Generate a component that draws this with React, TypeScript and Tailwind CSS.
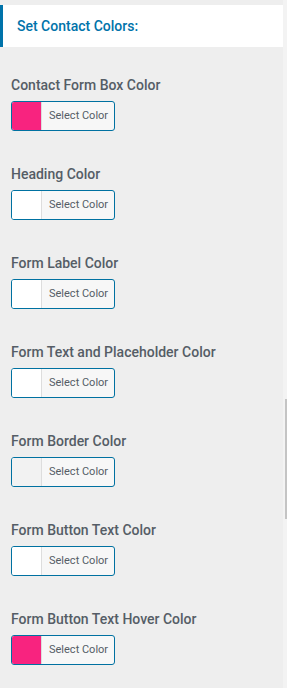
import React from "react";

const items: { label: string; color: string }[] = [
  { label: "Contact Form Box Color", color: "#f8237f" },
  { label: "Heading Color", color: "#ffffff" },
  { label: "Form Label Color", color: "#ffffff" },
  { label: "Form Text and Placeholder Color", color: "#ffffff" },
  { label: "Form Border Color", color: "#f2f2f2" },
  { label: "Form Button Text Color", color: "#ffffff" },
  { label: "Form Button Text Hover Color", color: "#f8237f" },
];

export default function App() {
  return (
    <div
      className="flex w-[287px] h-[688px] bg-[#eeeeee] overflow-hidden"
      style={{ fontFamily: "Roboto, 'Liberation Sans', sans-serif" }}
    >
      <div className="flex-1 flex flex-col pt-[5px]">
        <div className="h-[42px] bg-white border-l-[3px] border-[#0073aa] flex items-center pl-[14px]">
          <span className="text-[14px] font-medium text-[#0073aa] leading-[20px]">
            Set Contact Colors:
          </span>
        </div>
        <div className="flex flex-col gap-[33px] pt-[28px] pl-[11px]">
          {items.map((it) => (
            <div key={it.label} className="flex flex-col">
              <div className="text-[14px] font-medium text-[#555d66] leading-[20px] whitespace-nowrap">
                {it.label}
              </div>
              <div className="mt-[6px] flex w-[104px] h-[30px] border border-[#0071a1] rounded-[3px] overflow-hidden bg-[#f7f7f7]">
                <div
                  className="w-[30px] h-full border-r border-[#dddddd]"
                  style={{ backgroundColor: it.color }}
                />
                <div className="flex-1 flex items-center pl-[7px] text-[11px] text-[#555d66]">
                  Select Color
                </div>
              </div>
            </div>
          ))}
        </div>
      </div>
      <div className="w-[4px] bg-[#f3f3f3] flex flex-col">
        <div className="mt-[399px] ml-[2px] w-[2px] h-[120px] bg-[#c4c4c4]" />
      </div>
    </div>
  );
}
